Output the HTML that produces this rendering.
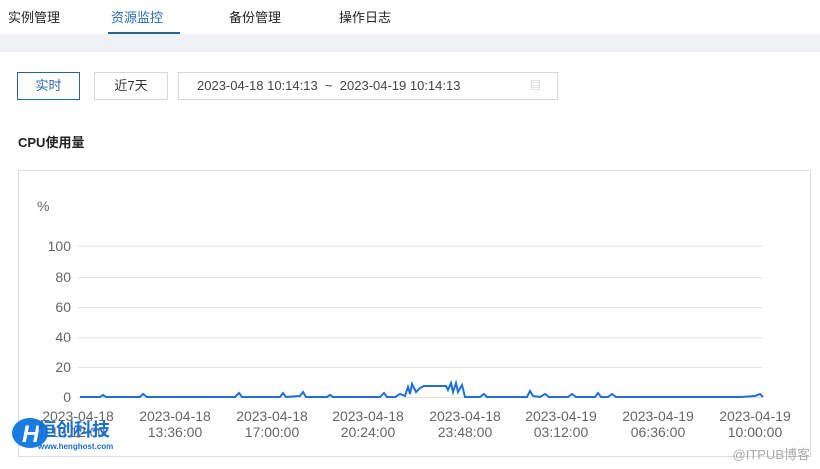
<!DOCTYPE html><html><head><meta charset="utf-8"><style>
body{margin:0;width:820px;height:469px;background:#fff;font-family:"Liberation Sans","Noto Sans CJK SC",sans-serif;position:relative;overflow:hidden;color:#333}
.a{position:absolute;white-space:nowrap}
.tab{top:7px;font-size:13px;color:#222}
.btn{position:absolute;top:72px;height:26px;border:1px solid #d9d9d9;font-size:13px;line-height:26px;text-align:center;box-sizing:border-box}
</style></head><body>
<div class="a tab" style="left:8px">实例管理</div>
<div class="a tab" style="left:111px;color:#2a6bb0">资源监控</div>
<div class="a tab" style="left:229px">备份管理</div>
<div class="a tab" style="left:339px">操作日志</div>
<div class="a" style="left:108px;top:32px;width:72px;height:2px;background:#2a6496"></div>
<div class="a" style="left:0;top:34px;width:820px;height:18px;background:#f0f1f5"></div>
<div class="btn" style="left:17px;width:63px;border-color:#2a6496;color:#2a6bb0;height:28px;line-height:26px">实时</div>
<div class="btn" style="left:94px;width:74px;height:28px">近7天</div>
<div class="btn" style="left:178px;width:380px;height:28px;text-align:left;padding-left:18px;color:#444">2023-04-18 10:14:13 &nbsp;~ &nbsp;2023-04-19 10:14:13<span style="position:absolute;right:16px;top:0;color:#bbb;font-size:11px">▤</span></div>
<div class="a" style="left:18px;top:132px;font-size:13px;font-weight:bold;color:#222">CPU使用量</div>
<div class="a" style="left:18px;top:170px;width:793px;height:287px;border:1px solid #ddd;box-sizing:border-box"></div>
<svg class="a" style="left:0;top:0" width="820" height="469" font-family="Liberation Sans, sans-serif" font-size="14" fill="#666">
<text x="37" y="211">%</text>
<g stroke="#e3e3e3"><line x1="78" x2="762" y1="246.5" y2="246.5"/><line x1="78" x2="762" y1="277.5" y2="277.5"/><line x1="78" x2="762" y1="307.5" y2="307.5"/><line x1="78" x2="762" y1="337.5" y2="337.5"/><line x1="78" x2="762" y1="367.5" y2="367.5"/><line x1="78" x2="762" y1="397.5" y2="397.5"/></g>
<g text-anchor="end"><text x="71" y="251">100</text><text x="71" y="282">80</text><text x="71" y="312">60</text><text x="71" y="342">40</text><text x="71" y="372">20</text><text x="71" y="402">0</text></g>
<path d="M80 397 L100 397 L103 395 L106 397 L140 397 L143 394 L147 397 L235 397 L239 393 L242 397 L280 397 L283 393 L286 397 L300 396 L303 392 L306 397 L327 397 L330 395 L333 397 L380 397 L384 393 L387 397 L395 397 L400 394 L405 396 L408 387 L410 394 L412 384 L416 392 L420 388 L424 386 L440 386 L446 386 L448 390 L451 383 L453 392 L456 383 L458 392 L462 385 L465 397 L480 397 L484 394 L487 397 L500 397 L527 397 L530 391 L533 396 L540 397 L545 394 L549 397 L568 397 L572 394 L576 397 L595 397 L598 393 L601 397 L608 397 L612 394 L616 397 L640 397 L740 397 L755 396 L760 394 L763 397" fill="none" stroke="#1f6fd6" stroke-width="2"/>
<g text-anchor="middle"><text x="78" y="421">2023-04-18</text><text x="78" y="437">10:12:00</text>
<text x="175" y="421">2023-04-18</text><text x="175" y="437">13:36:00</text>
<text x="272" y="421">2023-04-18</text><text x="272" y="437">17:00:00</text>
<text x="368" y="421">2023-04-18</text><text x="368" y="437">20:24:00</text>
<text x="465" y="421">2023-04-18</text><text x="465" y="437">23:48:00</text>
<text x="561" y="421">2023-04-19</text><text x="561" y="437">03:12:00</text>
<text x="658" y="421">2023-04-19</text><text x="658" y="437">06:36:00</text>
<text x="755" y="421">2023-04-19</text><text x="755" y="437">10:00:00</text></g>
<ellipse cx="30" cy="433" rx="18" ry="15" fill="#1a7be0"/>
<text x="22" y="442" font-size="24" font-weight="bold" font-style="italic" fill="#fff">H</text>
<text x="38" y="436" font-size="18" font-weight="bold" fill="#1a6fd0" font-family="Noto Sans CJK SC, sans-serif">恒创科技</text>
<text x="38" y="449" font-size="8" font-weight="bold" fill="#1a6fd0">www.henghost.com</text>
<text x="810" y="459" text-anchor="end" font-size="13" fill="#aaa" font-family="Liberation Sans, Noto Sans CJK SC, sans-serif">@ITPUB博客</text>
</svg>
</body></html>
